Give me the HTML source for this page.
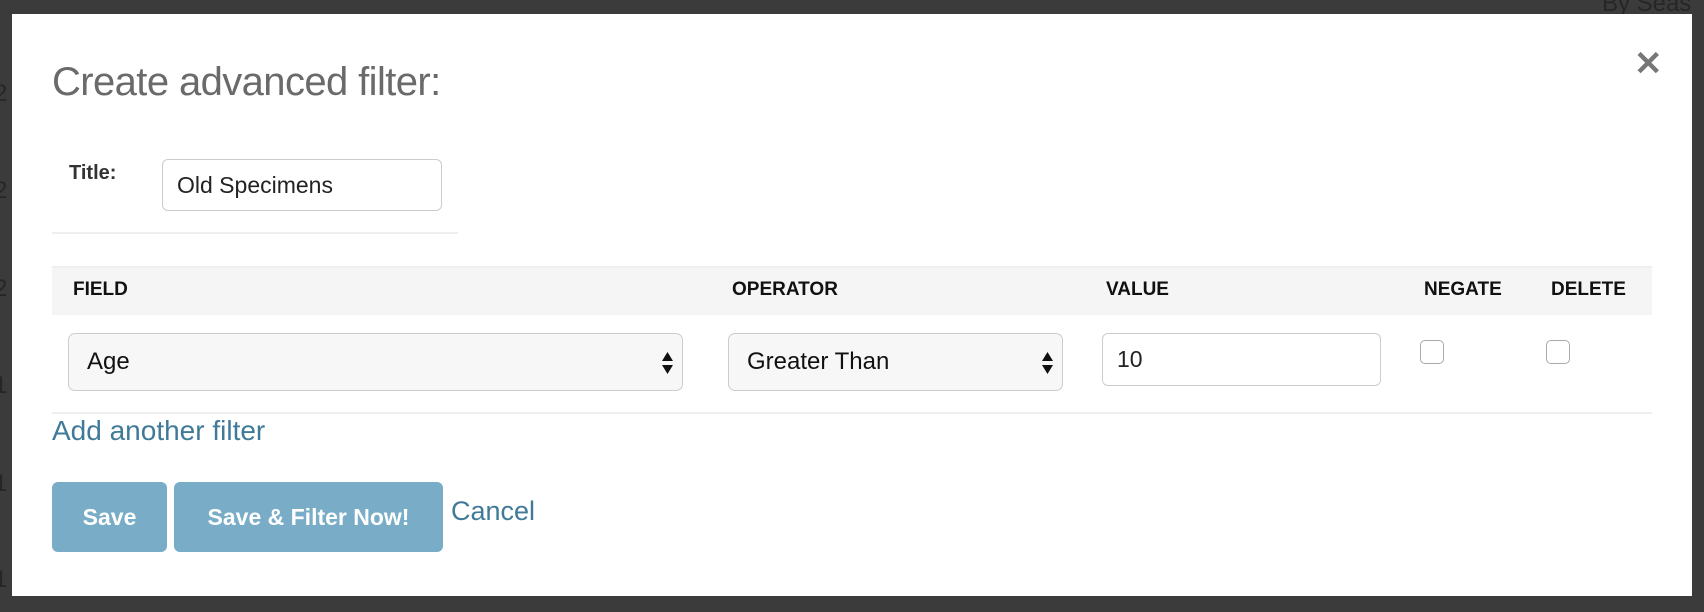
<!DOCTYPE html>
<html><head><meta charset="utf-8"><style>
*{box-sizing:border-box;margin:0;padding:0}
body{width:1704px;height:612px;background:#3b3b3b;position:relative;overflow:hidden;font-family:"Liberation Sans",Arial,sans-serif}
.bg{position:absolute;color:#262626;font-size:24px}
.modal{position:absolute;left:12px;top:14px;width:1680px;height:582px;background:#fff}
.a{position:absolute}
h1{position:absolute;left:40px;top:46px;font-weight:normal;font-size:40px;color:#6a6a6a;letter-spacing:-0.6px}
.lbl{font-weight:bold;font-size:20px;color:#333}
.inp{border:1.5px solid #ccc;border-radius:6px;background:#fff;font-size:23px;color:#222;padding-left:14px;display:flex;align-items:center}
.sel{border:1.5px solid #ccc;border-radius:7px;background:#f7f7f7;font-size:24px;color:#111;padding-left:18px;display:flex;align-items:center}
.arr{position:absolute;right:8px;top:17px;width:13px;height:24px}
.th{font-weight:bold;font-size:19px;color:#111}
.cb{border:1.5px solid #aaa;border-radius:5px;width:24px;height:24px;background:#fff}
.btn{background:#79adc7;border-radius:6px;color:#fff;font-size:23px;font-weight:bold;display:flex;align-items:center;justify-content:center}
.link{color:#3f7a99;font-size:26px}
</style></head><body>
<div class="bg" style="left:1602px;top:-10px">By Seas</div>
<div class="bg" style="left:-6px;top:80px">2</div>
<div class="bg" style="left:-6px;top:177px">2</div>
<div class="bg" style="left:-6px;top:275px">2</div>
<div class="bg" style="left:-6px;top:372px">1</div>
<div class="bg" style="left:-6px;top:470px">1</div>
<div class="bg" style="left:-6px;top:566px">1</div>
<div class="modal">
<h1>Create advanced filter:</h1>
<div class="a" style="left:1622px;top:30px;font-size:34px;font-weight:bold;color:#777">✕</div>
<div class="a lbl" style="left:57px;top:148px">Title:</div>
<div class="a inp" style="left:150px;top:145px;width:280px;height:52px">Old Specimens</div>
<div class="a" style="left:40px;top:218px;width:406px;height:2px;background:#eee"></div>
<div class="a" style="left:40px;top:252px;width:1600px;height:49px;background:#f5f5f5;border-top:2px solid #eee"></div>
<div class="a th" style="left:61px;top:265px">FIELD</div>
<div class="a th" style="left:720px;top:265px">OPERATOR</div>
<div class="a th" style="left:1094px;top:265px">VALUE</div>
<div class="a th" style="left:1412px;top:265px">NEGATE</div>
<div class="a th" style="left:1539px;top:265px">DELETE</div>
<div class="a sel" style="left:56px;top:319px;width:615px;height:58px">Age<svg class="arr" viewBox="0 0 13 24"><path d="M6.5 1L12 10H1Z M6.5 23L12 14H1Z" fill="#111"/></svg></div>
<div class="a sel" style="left:716px;top:319px;width:335px;height:58px">Greater Than<svg class="arr" viewBox="0 0 13 24"><path d="M6.5 1L12 10H1Z M6.5 23L12 14H1Z" fill="#111"/></svg></div>
<div class="a inp" style="left:1090px;top:319px;width:279px;height:53px;font-size:23px">10</div>
<div class="a cb" style="left:1408px;top:326px"></div>
<div class="a cb" style="left:1534px;top:326px"></div>
<div class="a" style="left:40px;top:398px;width:1600px;height:2px;background:#eee"></div>
<div class="a link" style="left:40px;top:401px;font-size:28px">Add another filter</div>
<div class="a btn" style="left:40px;top:468px;width:115px;height:70px">Save</div>
<div class="a btn" style="left:162px;top:468px;width:269px;height:70px">Save &amp; Filter Now!</div>
<div class="a link" style="left:439px;top:482px;font-size:27px">Cancel</div>
</div>
</body></html>
